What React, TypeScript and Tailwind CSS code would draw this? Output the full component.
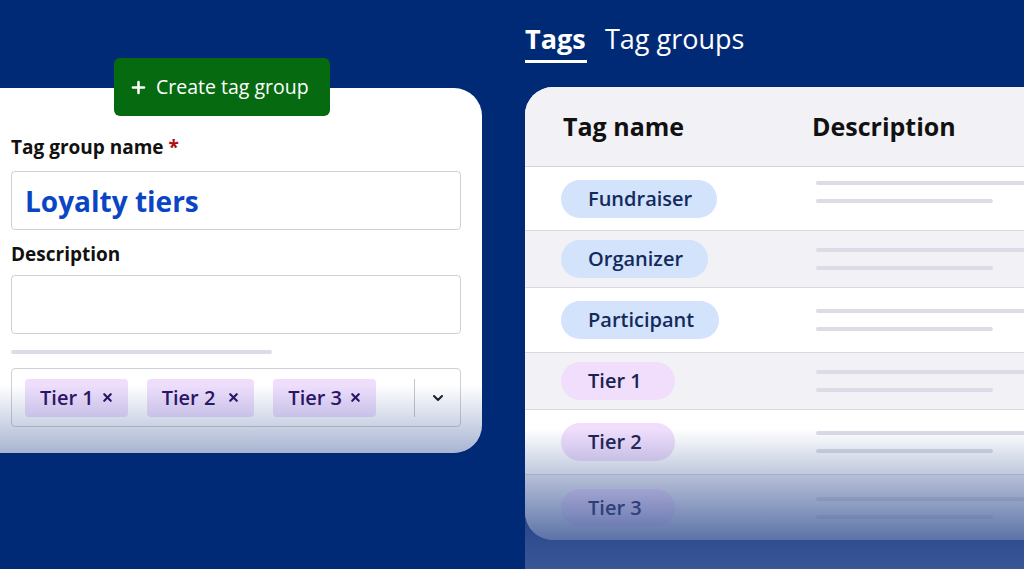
import React from "react";
import { ChevronDown, Plus, X } from "lucide-react";

const font = { fontFamily: '"Open Sans", "Noto Sans", sans-serif' };

function Chip({ label, wide }: { label: string; wide?: boolean }) {
  return (
    <div className="flex h-[38px] items-center rounded-[4px] bg-[#eedefc] pl-[15px] pr-[14px] text-[20px] font-semibold text-[#2a1262]">
      <span>{label}</span>
      <X className={wide ? "ml-[12px]" : "ml-[7px]"} size={13} strokeWidth={4} />
    </div>
  );
}

const rows = [
  { label: "Fundraiser", kind: "blue", h: "h-[64px]", bg: "bg-white", lines: "-mt-[14px]" },
  { label: "Organizer", kind: "blue", h: "h-[57px]", bg: "bg-[#f2f2f6]", lines: "" },
  { label: "Participant", kind: "blue", h: "h-[65px]", bg: "bg-white", lines: "" },
  { label: "Tier 1", kind: "purple", h: "h-[57px]", bg: "bg-[#f2f2f6]", lines: "" },
  { label: "Tier 2", kind: "purple", h: "h-[65px]", bg: "bg-white", lines: "" },
  { label: "Tier 3", kind: "purple", h: "h-[65px]", bg: "bg-[#f2f2f6]", lines: "" },
];

export default function App() {
  return (
    <div style={font} className="h-[569px] w-[1024px] overflow-hidden bg-[#012a76]">
      <div className="flex h-full">
        {/* Left column */}
        <div className="flex w-[525px] shrink-0 flex-col pt-[58px]">
          <button className="relative z-10 -mb-[28px] ml-[114px] flex h-[58px] w-[216px] items-center rounded-[6px] bg-[#066b10] pl-[15px] text-[19.5px] text-white">
            <Plus size={19} strokeWidth={3.2} />
            <span className="ml-[8px]">Create tag group</span>
          </button>
          <div className="relative -ml-[30px] w-[512px] overflow-hidden rounded-[28px] bg-white pl-[41px] pr-[21px] pt-[47px] pb-[26px]">
            <div className="text-[19px] font-bold leading-[24px] text-[#111]">
              Tag group name <span className="text-[#b00d0d]">*</span>
            </div>
            <div className="mt-[12px] flex h-[59px] items-center rounded-[4px] border border-[#cfcfd6] pl-[13px] text-[28px] font-bold text-[#0a46c4]">
              Loyalty tiers
            </div>
            <div className="mt-[12px] text-[19px] font-bold leading-[24px] text-[#111]">Description</div>
            <div className="mt-[9px] h-[59px] rounded-[4px] border border-[#cfcfd6]" />
            <div className="mt-[16px] h-[4px] w-[261px] rounded-full bg-[#dddbe8]" />
            <div className="mt-[14px] flex h-[59px] items-center rounded-[4px] border border-[#cfcfd6] pl-[13px]">
              <div className="flex gap-[19px]">
                <Chip label="Tier 1" />
                <Chip label="Tier 2" wide />
                <Chip label="Tier 3" />
              </div>
              <div className="ml-auto h-[38px] w-px bg-[#c6c6cf]" />
              <div className="flex w-[45px] justify-center text-[#1a1a2a]">
                <ChevronDown size={16} strokeWidth={3} />
              </div>
            </div>
            <div className="pointer-events-none absolute inset-x-0 bottom-0 h-[68px] bg-[linear-gradient(to_bottom,rgba(47,77,146,0),rgba(47,77,146,0.42))]" />
          </div>
        </div>

        {/* Right column */}
        <div className="relative min-w-0 flex-1">
          <div className="flex h-[87px] items-start pt-[21px] text-[27px] leading-[36px] text-white">
            <div className="flex flex-col">
              <span className="font-bold">Tags</span>
              <div className="mt-[3px] h-[3px] w-[62px] bg-white" />
            </div>
            <span className="ml-[18px]">Tag groups</span>
          </div>
          <div className="w-[540px] overflow-hidden rounded-l-[28px] bg-white">
            <div className="flex h-[80px] items-center border-b border-[#d4d4dc] bg-[#f1f1f6] text-[25px] font-bold text-[#111]">
              <div className="w-[287px] pl-[38px]">Tag name</div>
              <div>Description</div>
            </div>
            {rows.map((r, i) => (
              <div
                key={r.label}
                className={`flex items-center ${r.h} ${r.bg} ${i < rows.length - 1 ? "border-b border-[#d8d8e0]" : ""}`}
              >
                <div className="w-[291px] pl-[36px]">
                  <span
                    className={`inline-flex h-[38px] items-center rounded-full pl-[27px] text-[20px] font-semibold ${
                      r.kind === "blue" ? "bg-[#d2e3fb] pr-[25px] text-[#142a5c]" : "w-[114px] bg-[#f0defc] text-[#1b2250]"
                    }`}
                  >
                    {r.label}
                  </span>
                </div>
                <div className={`flex flex-1 flex-col gap-[14px] ${r.lines}`}>
                  <div className="h-[4px] w-full rounded-l-full bg-[#dcdce6]" />
                  <div className="h-[4px] w-[177px] rounded-full bg-[#dcdce6]" />
                </div>
              </div>
            ))}
          </div>
          <div className="pointer-events-none absolute inset-x-0 bottom-0 h-[140px] bg-[linear-gradient(to_bottom,rgba(58,86,150,0)_0%,rgba(58,86,150,0.35)_35%,rgba(58,86,150,0.8)_78%,rgba(58,86,150,1)_100%)]" />
        </div>
      </div>
    </div>
  );
}
